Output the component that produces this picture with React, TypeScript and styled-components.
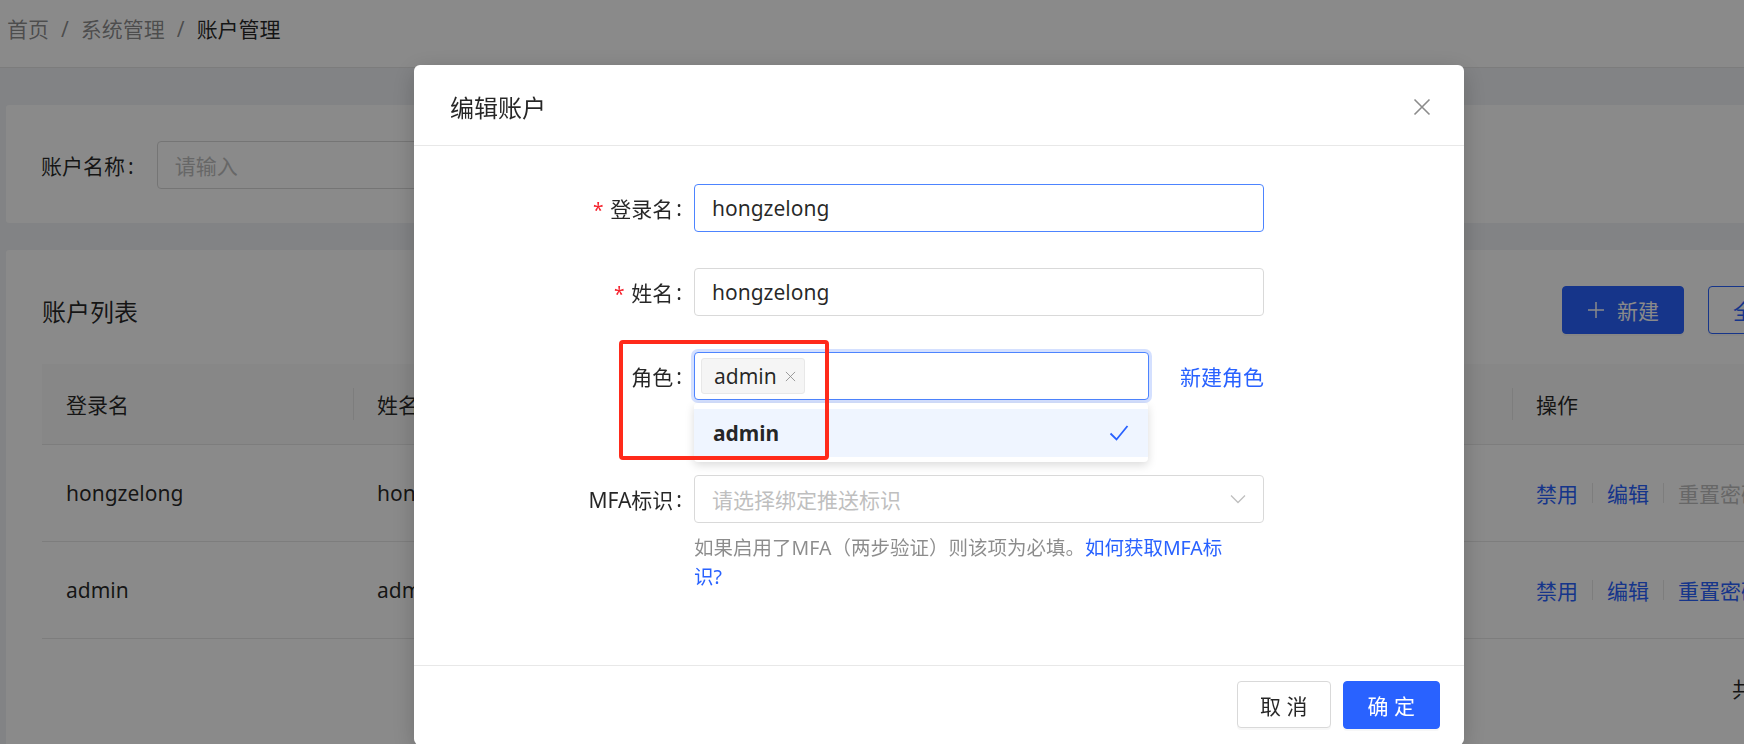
import React from "react";
import styled, { createGlobalStyle } from "styled-components";

const FONT = `"Noto Sans", "Noto Sans CJK SC", sans-serif`;
const BLUE = "#2962ff";
const TEXT = "rgba(0, 0, 0, 0.85)";
const MUTED = "rgba(0, 0, 0, 0.45)";
const LINE = "#e8e8e8";

const GlobalStyle = createGlobalStyle`
  *, *::before, *::after { box-sizing: border-box; }
  html, body { margin: 0; padding: 0; overflow: hidden; }
  body {
    background: #f0f2f5;
    font-family: ${FONT};
    font-size: 21px;
    color: ${TEXT};
  }
`;

const Page = styled.div`
  width: 1744px;
  height: 744px;
  overflow: hidden;
`;

/* ---------- top bar ---------- */
const TopBar = styled.header`
  height: 68px;
  background: #fff;
  border-bottom: 1px solid #e6e6e6;
  display: flex;
  align-items: center;
  padding: 0 0 8px 7px;
`;

const Crumb = styled.span<{ $current?: boolean }>`
  color: ${(p) => (p.$current ? TEXT : MUTED)};
  line-height: 1;
`;

const CrumbSep = styled.span`
  margin: 0 12px;
  color: ${MUTED};
  line-height: 1;
`;

/* ---------- page content ---------- */
const Content = styled.main`
  width: 2013px;
  padding: 37px 0 0 6px;
  display: flex;
  flex-direction: column;
  gap: 27px;
`;

const SearchCard = styled.section`
  background: #fff;
  border-radius: 3px;
  padding: 36px 35px 34px;
  display: flex;
  align-items: center;
`;

const SearchLabel = styled.label`
  margin-right: 23px;
  white-space: nowrap;
`;

const Colon = styled.span`
  margin-left: 3px;
`;

const Field = styled.div<{ $width?: number; $focus?: boolean; $ring?: boolean }>`
  position: relative;
  width: ${(p) => (p.$width ? `${p.$width}px` : "100%")};
  height: 48px;
  border: 1px solid ${(p) => (p.$focus ? "#4d84ff" : "#d9d9d9")};
  border-radius: 4px;
  background: #fff;
  display: flex;
  align-items: center;
  padding: 0 17px;
  font-size: 21px;
  color: ${TEXT};
  white-space: nowrap;
  box-shadow: ${(p) => (p.$ring ? "0 0 0 3px rgba(41, 98, 255, 0.2)" : "none")};
`;

const Placeholder = styled.span`
  color: #bfbfbf;
  flex: 1;
`;

const ListCard = styled.section`
  background: #fff;
  border-radius: 3px;
  padding: 36px 36px 40px;
  height: 520px;
`;

const ListHeader = styled.div`
  display: grid;
  grid-template-columns: 1496px max-content max-content;
  justify-content: start;
  column-gap: 24px;
  align-items: center;
  height: 48px;
`;

const ListTitle = styled.h2`
  margin: 0;
  font-size: 24px;
  font-weight: 400;
  color: ${TEXT};
`;

const Button = styled.button<{ $variant: "primary" | "outline" | "default" }>`
  height: ${(p) => (p.$variant === "default" ? 47 : 48)}px;
  padding: 0 ${(p) => (p.$variant === "default" ? 22 : 24)}px;
  display: inline-flex;
  align-items: center;
  gap: 12px;
  border-radius: 4px;
  font-family: ${FONT};
  font-size: 21px;
  cursor: pointer;
  white-space: nowrap;
  border: 1px solid
    ${(p) => (p.$variant === "default" ? "#d9d9d9" : BLUE)};
  background: ${(p) => (p.$variant === "primary" ? BLUE : "#fff")};
  color: ${(p) =>
    p.$variant === "primary" ? "#fff" : p.$variant === "outline" ? BLUE : TEXT};
  box-shadow: 0 2px 0 rgba(0, 0, 0, 0.03);
`;

const Table = styled.div`
  margin-top: 30px;
`;

const TRow = styled.div<{ $head?: boolean }>`
  display: grid;
  grid-template-columns: 311px 386px 387px 386px 1fr;
  height: ${(p) => (p.$head ? 81 : 97)}px;
  background: ${(p) => (p.$head ? "#fafafa" : "#fff")};
  border-bottom: 1px solid ${LINE};
  align-items: center;
`;

const Cell = styled.div<{ $head?: boolean }>`
  position: relative;
  padding-left: 24px;
  white-space: nowrap;
  overflow: hidden;
  display: flex;
  align-items: center;
  height: 100%;
  &:not(:first-child)::before {
    content: ${(p) => (p.$head ? '""' : "none")};
    position: absolute;
    left: 0;
    top: 50%;
    width: 1px;
    height: 32px;
    margin-top: -16px;
    background: ${LINE};
  }
`;

const ActionLink = styled.a<{ $disabled?: boolean }>`
  color: ${(p) => (p.$disabled ? "#bfbfbf" : BLUE)};
  text-decoration: none;
`;

const ActionSep = styled.span`
  width: 1px;
  height: 20px;
  background: ${LINE};
  margin: 0 14px;
`;

const PaginationBar = styled.div`
  margin-top: 25px;
  height: 48px;
  display: flex;
  align-items: center;
  justify-content: flex-end;
  gap: 12px;
`;

const PagerItem = styled.span<{ $active?: boolean }>`
  width: 48px;
  height: 48px;
  display: inline-flex;
  align-items: center;
  justify-content: center;
  border: 1px solid ${(p) => (p.$active ? BLUE : "#d9d9d9")};
  border-radius: 4px;
  color: ${(p) => (p.$active ? BLUE : TEXT)};
`;

/* ---------- modal ---------- */
const Mask = styled.div`
  position: fixed;
  inset: 0;
  background: rgba(0, 0, 0, 0.46);
  padding: 65px 0 0 414px;
`;

const Modal = styled.div`
  width: 1050px;
  background: #fff;
  border-radius: 6px;
  box-shadow: 0 6px 24px rgba(0, 0, 0, 0.2);
`;

const ModalHeader = styled.div`
  height: 81px;
  border-bottom: 1px solid ${LINE};
  display: flex;
  align-items: center;
  justify-content: space-between;
  padding: 3px 33px 0 36px;
`;

const ModalTitle = styled.h3`
  margin: 0;
  font-size: 24px;
  font-weight: 400;
  color: ${TEXT};
`;

const CloseButton = styled.span`
  display: inline-flex;
  width: 18px;
  height: 18px;
`;

const ModalBody = styled.div`
  padding: 38px 36px 74px;
`;

const FormRow = styled.div<{ $gap?: number }>`
  position: relative;
  display: grid;
  grid-template-columns: 244px 570px;
  align-items: start;
  margin-bottom: ${(p) => (p.$gap ?? 36)}px;
`;

const FormLabel = styled.label`
  display: flex;
  justify-content: flex-end;
  align-items: center;
  height: 48px;
  padding-right: 12px;
  white-space: nowrap;
  color: ${TEXT};
`;

const Required = styled.span`
  color: #f5222d;
  font-size: 19px;
  line-height: 1;
  margin-right: 7px;
  transform: translateY(2px);
`;

const Control = styled.div`
  display: flex;
  flex-direction: column;
`;

const InlineControl = styled.div`
  display: flex;
  align-items: center;
  justify-content: space-between;
  height: 48px;
`;

const Link = styled.a<{ $nowrap?: boolean }>`
  color: ${BLUE};
  text-decoration: none;
  white-space: ${(p) => (p.$nowrap ? "nowrap" : "normal")};
`;

const MultiSelect = styled(Field)`
  padding: 0 6px;
`;

const Tag = styled.span`
  height: 36px;
  display: inline-flex;
  align-items: center;
  gap: 8px;
  padding: 0 8px 0 12px;
  background: #f5f5f5;
  border: 1px solid ${LINE};
  border-radius: 3px;
  color: ${TEXT};
`;

const Dropdown = styled.div`
  position: absolute;
  top: calc(100% + 4px);
  left: -1px;
  right: 0;
  background: #fff;
  border-radius: 4px;
  padding: 6px 0 5px;
  box-shadow: 0 3px 10px rgba(0, 0, 0, 0.15);
  z-index: 5;
`;

const Option = styled.div<{ $active?: boolean }>`
  height: 48px;
  display: flex;
  align-items: center;
  justify-content: space-between;
  padding: 0 19px 0 19px;
  background: ${(p) => (p.$active ? "#eff5ff" : "#fff")};
  font-weight: 700;
  color: ${TEXT};
`;

const Annotation = styled.div`
  position: absolute;
  left: 169px;
  top: -12px;
  width: 210px;
  height: 120px;
  border: 4px solid #ff2a1a;
  border-radius: 4px;
  z-index: 10;
  pointer-events: none;
`;

const Help = styled.p`
  margin: 10px 0 0;
  max-width: 550px;
  font-size: 19.5px;
  line-height: 29px;
  color: ${MUTED};
`;

const ModalFooter = styled.div`
  border-top: 1px solid ${LINE};
  padding: 15px 24px 16px;
  display: flex;
  justify-content: flex-end;
  gap: 12px;
`;

/* ---------- icons ---------- */
const PlusIcon = () => (
  <svg width="18" height="18" viewBox="0 0 18 18" fill="none">
    <path d="M9 1v16M1 9h16" stroke="currentColor" strokeWidth="1.5" />
  </svg>
);

const CloseIcon = ({ size = 18, color = "#8c8c8c", w = 1.6 }: { size?: number; color?: string; w?: number }) => (
  <svg width={size} height={size} viewBox="0 0 18 18" fill="none">
    <path d="M1.5 1.5l15 15M16.5 1.5l-15 15" stroke={color} strokeWidth={w} />
  </svg>
);

const CheckIcon = () => (
  <svg width="20" height="18" viewBox="0 0 20 18" fill="none">
    <path d="M1.5 9.5l6 6L18.5 2" stroke={BLUE} strokeWidth="1.8" />
  </svg>
);

const ChevronIcon = () => (
  <svg width="16" height="10" viewBox="0 0 16 10" fill="none">
    <path d="M1 1.5l7 7 7-7" stroke="#bfbfbf" strokeWidth="1.3" />
  </svg>
);

const rows = [
  { login: "hongzelong", name: "hongzelong", resetDisabled: true },
  { login: "admin", name: "admin", resetDisabled: false },
];

export default function App() {
  return (
    <>
      <GlobalStyle />
      <Page>
        <TopBar>
          <Crumb>首页</Crumb>
          <CrumbSep>/</CrumbSep>
          <Crumb>系统管理</Crumb>
          <CrumbSep>/</CrumbSep>
          <Crumb $current>账户管理</Crumb>
        </TopBar>

        <Content>
          <SearchCard>
            <SearchLabel>
              账户名称<Colon>:</Colon>
            </SearchLabel>
            <Field $width={380}>
              <Placeholder>请输入</Placeholder>
            </Field>
          </SearchCard>

          <ListCard>
            <ListHeader>
              <ListTitle>账户列表</ListTitle>
              <Button $variant="primary">
                <PlusIcon />
                新建
              </Button>
              <Button $variant="outline">全部导出</Button>
            </ListHeader>

            <Table>
              <TRow $head>
                <Cell $head>登录名</Cell>
                <Cell $head>姓名</Cell>
                <Cell $head>角色</Cell>
                <Cell $head>状态</Cell>
                <Cell $head>操作</Cell>
              </TRow>
              {rows.map((r) => (
                <TRow key={r.login}>
                  <Cell>{r.login}</Cell>
                  <Cell>{r.name}</Cell>
                  <Cell>{r.login}</Cell>
                  <Cell>启用</Cell>
                  <Cell>
                    <ActionLink>禁用</ActionLink>
                    <ActionSep />
                    <ActionLink>编辑</ActionLink>
                    <ActionSep />
                    <ActionLink $disabled={r.resetDisabled}>重置密码</ActionLink>
                  </Cell>
                </TRow>
              ))}
            </Table>

            <PaginationBar>
              <span>共 2 条</span>
              <PagerItem>‹</PagerItem>
              <PagerItem $active>1</PagerItem>
              <PagerItem>›</PagerItem>
            </PaginationBar>
          </ListCard>
        </Content>

        <Mask>
          <Modal>
            <ModalHeader>
              <ModalTitle>编辑账户</ModalTitle>
              <CloseButton>
                <CloseIcon />
              </CloseButton>
            </ModalHeader>

            <ModalBody>
              <FormRow>
                <FormLabel>
                  <Required>*</Required>登录名<Colon>:</Colon>
                </FormLabel>
                <Field $focus>hongzelong</Field>
              </FormRow>

              <FormRow>
                <FormLabel>
                  <Required>*</Required>姓名<Colon>:</Colon>
                </FormLabel>
                <Field>hongzelong</Field>
              </FormRow>

              <FormRow $gap={75}>
                <FormLabel>
                  角色<Colon>:</Colon>
                </FormLabel>
                <InlineControl>
                  <MultiSelect $width={455} $focus $ring>
                    <Tag>
                      admin
                      <CloseIcon size={11} w={1.4} />
                    </Tag>
                    <Dropdown>
                      <Option $active>
                        admin
                        <CheckIcon />
                      </Option>
                    </Dropdown>
                  </MultiSelect>
                  <Link $nowrap>新建角色</Link>
                </InlineControl>
                <Annotation />
              </FormRow>

              <FormRow $gap={0}>
                <FormLabel>
                  MFA标识<Colon>:</Colon>
                </FormLabel>
                <Control>
                  <Field>
                    <Placeholder>请选择绑定推送标识</Placeholder>
                    <ChevronIcon />
                  </Field>
                  <Help>
                    如果启用了MFA（两步验证）则该项为必填。
                    <Link>如何获取MFA标识?</Link>
                  </Help>
                </Control>
              </FormRow>
            </ModalBody>

            <ModalFooter>
              <Button $variant="default">取 消</Button>
              <Button $variant="primary">确 定</Button>
            </ModalFooter>
          </Modal>
        </Mask>
      </Page>
    </>
  );
}
